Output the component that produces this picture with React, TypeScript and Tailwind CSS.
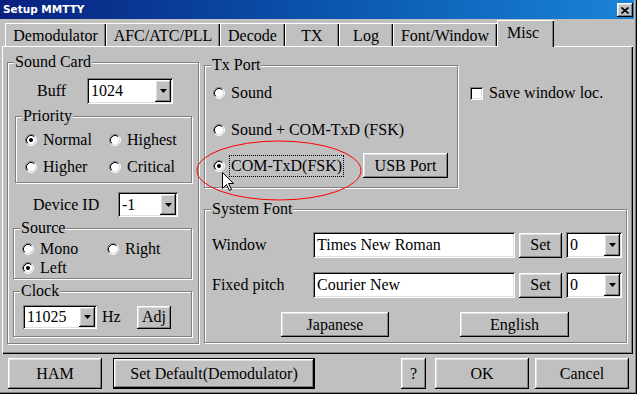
import type { ReactNode } from 'react';

const raised =
  'bg-[#c0c0c0] shadow-[inset_-1px_-1px_0_#000,inset_1px_1px_0_#fff,inset_-2px_-2px_0_#808080,inset_2px_2px_0_#dfdfdf]';
const sunken =
  'bg-white shadow-[inset_1px_1px_0_#808080,inset_-1px_-1px_0_#fff,inset_2px_2px_0_#000,inset_-2px_-2px_0_#dfdfdf]';

function Group({ title, className, children }: { title: string; className: string; children?: ReactNode }) {
  return (
    <div className={`relative shrink-0 border border-[#808080] shadow-[inset_1px_1px_0_#fff,1px_1px_0_#fff] ${className}`}>
      <span className="absolute left-[6px] top-[-10px] bg-[#c0c0c0] px-[1px] leading-[18px]">{title}</span>
      {children}
    </div>
  );
}

function Radio({ checked = false }: { checked?: boolean }) {
  return (
    <svg width="12" height="12" viewBox="0 0 12 12" className="shrink-0">
      <circle cx="6" cy="6" r="4.5" fill="#fff" />
      <path d="M2.11 9.89A5.5 5.5 0 0 1 9.89 2.11" stroke="#808080" fill="none" />
      <path d="M9.89 2.11A5.5 5.5 0 0 1 2.11 9.89" stroke="#fff" fill="none" />
      <path d="M2.82 9.18A4.5 4.5 0 0 1 9.18 2.82" stroke="#000" fill="none" />
      <path d="M9.18 2.82A4.5 4.5 0 0 1 2.82 9.18" stroke="#dfdfdf" fill="none" />
      {checked && <circle cx="6" cy="6" r="2" fill="#000" />}
    </svg>
  );
}

function RadioItem({ label, checked, className = '' }: { label: string; checked?: boolean; className?: string }) {
  return (
    <div className={`flex items-center gap-[6px] ${className}`}>
      <Radio checked={checked} />
      <span className="leading-none">{label}</span>
    </div>
  );
}

function Combo({ value, className }: { value: string; className: string }) {
  return (
    <div className={`${sunken} flex shrink-0 items-stretch p-[2px] ${className}`}>
      <span className="flex flex-1 items-center pl-[2px] leading-none">{value}</span>
      <span className={`${raised} flex w-[16px] items-center justify-center`}>
        <svg width="7" height="4" viewBox="0 0 7 4">
          <path d="M0 0h7L3.5 4z" fill="#000" />
        </svg>
      </span>
    </div>
  );
}

function Button({ label, className }: { label: string; className: string }) {
  return <div className={`${raised} flex shrink-0 items-center justify-center leading-none ${className}`}>{label}</div>;
}

const tabs = [
  { name: 'Demodulator', w: 'w-[101px]' },
  { name: 'AFC/ATC/PLL', w: 'w-[114px]' },
  { name: 'Decode', w: 'w-[65px]' },
  { name: 'TX', w: 'w-[54px]' },
  { name: 'Log', w: 'w-[54px]' },
  { name: 'Font/Window', w: 'w-[104px]' },
];

export default function App() {
  return (
    <div className="relative flex h-[394px] w-[637px] flex-col overflow-hidden bg-[#c0c0c0] font-['Liberation_Serif','Times_New_Roman',serif] text-[16px] text-black shadow-[inset_-1px_-1px_0_#000,inset_-2px_-2px_0_#808080]">
      {/* Title bar */}
      <div className="mr-[3px] flex h-[19px] shrink-0 items-start bg-gradient-to-r from-[#0a2080] to-[#1a84d8]">
        <span className="mt-[3px] pl-[3px] font-['DejaVu_Sans',sans-serif] text-[10.5px] font-bold leading-[13px] text-white">
          Setup MMTTY
        </span>
        <div className={`${raised} mr-[1px] ml-auto mt-[3px] flex h-[14px] w-[16px] items-center justify-center`}>
          <svg width="8" height="7" viewBox="0 0 8 7">
            <path d="M0.5 0.5L7.5 6.5M7.5 0.5L0.5 6.5" stroke="#000" strokeWidth="1.6" />
          </svg>
        </div>
      </div>

      {/* Tabs */}
      <div className="flex h-[27px] shrink-0 items-end pl-[5px]">
        {tabs.map((t) => (
          <div
            key={t.name}
            className={`flex h-[23px] items-center justify-center pt-[2px] leading-none shadow-[inset_1px_1px_0_#fff,inset_-1px_0_0_#000,inset_-2px_0_0_#808080] ${t.w}`}
          >
            {t.name}
          </div>
        ))}
        <div className="relative z-10 -mb-px flex h-[27px] w-[57px] items-start justify-center bg-[#c0c0c0] pr-[5px] pt-[5px] leading-none shadow-[inset_1px_1px_0_#fff,inset_-1px_0_0_#000,inset_-2px_0_0_#808080]">
          Misc
        </div>
      </div>

      {/* Tab page */}
      <div className="ml-[2px] flex h-[308px] w-[631px] shrink-0 items-start pl-[5px] pt-[16px] shadow-[inset_1px_1px_0_#fff,inset_-1px_-1px_0_#000,inset_-2px_-2px_0_#808080]">
        {/* Sound Card */}
        <Group title="Sound Card" className="h-[282px] w-[192px]">
          <div className="mt-[15px] flex items-center pl-[29px]">
            <span className="w-[50px] leading-none">Buff</span>
            <Combo value="1024" className="h-[26px] w-[86px]" />
          </div>

          <Group title="Priority" className="ml-[7px] mt-[12px] h-[67px] w-[177px]">
            <div className="mt-[13px] flex h-[20px] items-center pl-[9px]">
              <RadioItem label="Normal" checked className="w-[84px]" />
              <RadioItem label="Highest" />
            </div>
            <div className="mt-[7px] flex h-[20px] items-center pl-[9px]">
              <RadioItem label="Higher" className="w-[84px]" />
              <RadioItem label="Critical" />
            </div>
          </Group>

          <div className="mt-[9px] flex items-center pl-[25px]">
            <span className="w-[85px] leading-none">Device ID</span>
            <Combo value="-1" className="h-[25px] w-[60px]" />
          </div>

          <Group title="Source" className="ml-[5px] mt-[11px] h-[51px] w-[179px]">
            <div className="mt-[11px] flex h-[18px] items-center pl-[8px]">
              <RadioItem label="Mono" className="w-[85px]" />
              <RadioItem label="Right" />
            </div>
            <div className="mt-px flex h-[18px] items-center pl-[8px]">
              <RadioItem label="Left" checked />
            </div>
          </Group>

          <Group title="Clock" className="ml-[5px] mt-[12px] h-[46px] w-[179px]">
            <div className="mt-[13px] flex items-center pl-[9px]">
              <Combo value="11025" className="h-[24px] w-[74px]" />
              <span className="ml-[5px] w-[35px] leading-none">Hz</span>
              <Button label="Adj" className="h-[23px] w-[34px]" />
            </div>
          </Group>
        </Group>

        {/* Right column */}
        <div className="ml-[5px] mt-[3px] flex flex-col">
          <div className="flex items-start">
            <Group title="Tx Port" className="h-[123px] w-[254px]">
              <div className="mt-[15px] flex h-[24px] items-center pl-[8px]">
                <RadioItem label="Sound" />
              </div>
              <div className="mt-[13px] flex h-[24px] items-center pl-[8px]">
                <RadioItem label="Sound + COM-TxD (FSK)" />
              </div>
              <div className="mt-[11px] flex h-[25px] items-center pl-[8px]">
                <div className="flex w-[150px] items-center gap-[4px]">
                  <Radio checked />
                  <span className="border border-dotted border-black px-px py-[2px] leading-none">COM-TxD(FSK)</span>
                </div>
                <Button label="USB Port" className="h-[25px] w-[85px]" />
              </div>
            </Group>
            <div className="ml-[12px] mt-[20px] flex items-center gap-[6px]">
              <div className={`${sunken} h-[13px] w-[13px]`} />
              <span className="leading-none">Save window loc.</span>
            </div>
          </div>

          <Group title="System Font" className="mt-[21px] h-[134px] w-[423px]">
            <div className="mt-[22px] flex items-center pl-[7px]">
              <span className="w-[101px] leading-none">Window</span>
              <div className={`${sunken} flex h-[26px] w-[202px] items-center pl-[4px] leading-none`}>Times New Roman</div>
              <Button label="Set" className="ml-[4px] h-[25px] w-[43px]" />
              <Combo value="0" className="ml-[4px] h-[26px] w-[56px]" />
            </div>
            <div className="mt-[14px] flex items-center pl-[7px]">
              <span className="w-[101px] leading-none">Fixed pitch</span>
              <div className={`${sunken} flex h-[26px] w-[202px] items-center pl-[4px] leading-none`}>Courier New</div>
              <Button label="Set" className="ml-[4px] h-[25px] w-[43px]" />
              <Combo value="0" className="ml-[4px] h-[26px] w-[56px]" />
            </div>
            <div className="mt-[14px] flex items-center pl-[76px]">
              <Button label="Japanese" className="h-[25px] w-[108px]" />
              <Button label="English" className="ml-[71px] h-[25px] w-[109px]" />
            </div>
          </Group>
        </div>
      </div>

      {/* Footer buttons */}
      <div className="mt-[4px] flex h-[31px] shrink-0 items-stretch pl-[8px]">
        <Button label="HAM" className="w-[94px]" />
        <div className="ml-[11px] flex w-[202px] border border-black">
          <Button label="Set Default(Demodulator)" className="flex-1" />
        </div>
        <Button label="?" className="ml-[86px] w-[25px]" />
        <Button label="OK" className="ml-[9px] w-[94px]" />
        <Button label="Cancel" className="ml-[6px] w-[94px]" />
      </div>

      {/* Red annotation ellipse */}
      <svg className="pointer-events-none absolute left-[195px] top-[139px]" width="170" height="64" viewBox="0 0 170 64">
        <ellipse cx="84" cy="31.5" rx="82" ry="29.5" fill="none" stroke="#ff0000" strokeWidth="1" />
      </svg>

      {/* Mouse cursor */}
      <svg className="pointer-events-none absolute left-[222px] top-[172px]" width="12" height="19" viewBox="0 0 12 19">
        <path d="M0.5 0.5V16.5L4.5 12.5L7.5 18.5L9.5 17.5L6.5 11.5H11.5Z" fill="#fff" stroke="#000" strokeWidth="1" />
      </svg>
    </div>
  );
}
